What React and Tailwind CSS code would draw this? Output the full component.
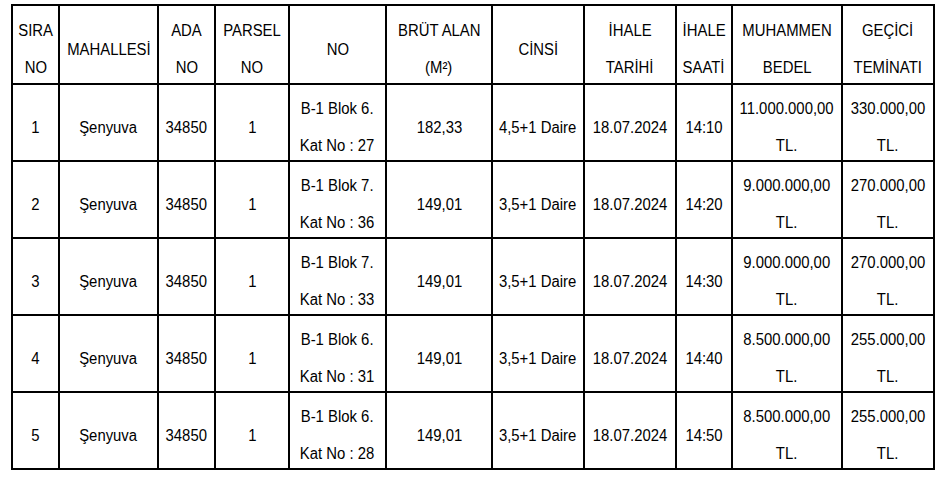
const headers = [
    ["SIRA", "NO"],
    ["MAHALLESİ"],
    ["ADA", "NO"],
    ["PARSEL", "NO"],
    ["NO"],
    ["BRÜT ALAN", "(M²)"],
    ["CİNSİ"],
    ["İHALE", "TARİHİ"],
    ["İHALE", "SAATİ"],
    ["MUHAMMEN", "BEDEL"],
    ["GEÇİCİ", "TEMİNATI"],
];

const rows = [
    { no: "1", blok: "B-1 Blok 6.", kat: "Kat No : 27", alan: "182,33", cins: "4,5+1 Daire", saat: "14:10", bedel: "11.000.000,00", teminat: "330.000,00" },
    { no: "2", blok: "B-1 Blok 7.", kat: "Kat No : 36", alan: "149,01", cins: "3,5+1 Daire", saat: "14:20", bedel: "9.000.000,00", teminat: "270.000,00" },
    { no: "3", blok: "B-1 Blok 7.", kat: "Kat No : 33", alan: "149,01", cins: "3,5+1 Daire", saat: "14:30", bedel: "9.000.000,00", teminat: "270.000,00" },
    { no: "4", blok: "B-1 Blok 6.", kat: "Kat No : 31", alan: "149,01", cins: "3,5+1 Daire", saat: "14:40", bedel: "8.500.000,00", teminat: "255.000,00" },
    { no: "5", blok: "B-1 Blok 6.", kat: "Kat No : 28", alan: "149,01", cins: "3,5+1 Daire", saat: "14:50", bedel: "8.500.000,00", teminat: "255.000,00" },
];

function Cell({ lines }) {
    return (
        <div className="bg-white flex flex-col items-center justify-center pt-[9px] text-center leading-[37px] whitespace-nowrap">
            {lines.map((line, i) => (
                <div key={i} className="scale-x-[0.93]">
                    {line}
                </div>
            ))}
        </div>
    );
}

export default function App() {
    return (
        <div className="bg-white w-[946px] h-[477px] pt-[4px] pl-[11px] font-['Liberation_Sans',Arial,sans-serif] text-[16px] text-black">
            <div className="grid w-fit grid-cols-[45px_97px_55px_72px_95px_104px_90px_90px_54px_108px_90px] grid-rows-[77px_repeat(5,75px)] gap-[2px] p-[2px] bg-black">
                {headers.map((h, i) => (
                    <Cell key={i} lines={h} />
                ))}

                {rows.map((r) => (
                    <div key={r.no} className="contents">
                        <Cell lines={[r.no]} />
                        <Cell lines={["Şenyuva"]} />
                        <Cell lines={["34850"]} />
                        <Cell lines={["1"]} />
                        <Cell lines={[r.blok, r.kat]} />
                        <Cell lines={[r.alan]} />
                        <Cell lines={[r.cins]} />
                        <Cell lines={["18.07.2024"]} />
                        <Cell lines={[r.saat]} />
                        <Cell lines={[r.bedel, "TL."]} />
                        <Cell lines={[r.teminat, "TL."]} />
                    </div>
                ))}
            </div>
        </div>
    );
}
